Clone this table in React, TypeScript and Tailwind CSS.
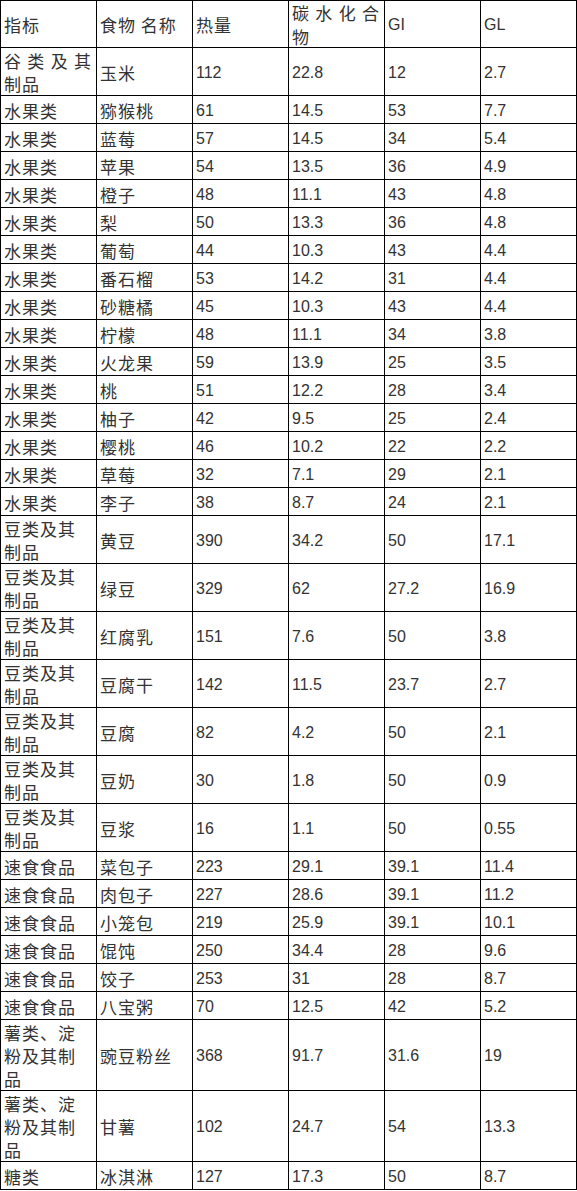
import React from "react";

type Row = [string, string, string, string, string, string];

const rows: Row[] = [
  ["谷类及其制品", "玉米", "112", "22.8", "12", "2.7"],
  ["水果类", "猕猴桃", "61", "14.5", "53", "7.7"],
  ["水果类", "蓝莓", "57", "14.5", "34", "5.4"],
  ["水果类", "苹果", "54", "13.5", "36", "4.9"],
  ["水果类", "橙子", "48", "11.1", "43", "4.8"],
  ["水果类", "梨", "50", "13.3", "36", "4.8"],
  ["水果类", "葡萄", "44", "10.3", "43", "4.4"],
  ["水果类", "番石榴", "53", "14.2", "31", "4.4"],
  ["水果类", "砂糖橘", "45", "10.3", "43", "4.4"],
  ["水果类", "柠檬", "48", "11.1", "34", "3.8"],
  ["水果类", "火龙果", "59", "13.9", "25", "3.5"],
  ["水果类", "桃", "51", "12.2", "28", "3.4"],
  ["水果类", "柚子", "42", "9.5", "25", "2.4"],
  ["水果类", "樱桃", "46", "10.2", "22", "2.2"],
  ["水果类", "草莓", "32", "7.1", "29", "2.1"],
  ["水果类", "李子", "38", "8.7", "24", "2.1"],
  ["豆类及其制品", "黄豆", "390", "34.2", "50", "17.1"],
  ["豆类及其制品", "绿豆", "329", "62", "27.2", "16.9"],
  ["豆类及其制品", "红腐乳", "151", "7.6", "50", "3.8"],
  ["豆类及其制品", "豆腐干", "142", "11.5", "23.7", "2.7"],
  ["豆类及其制品", "豆腐", "82", "4.2", "50", "2.1"],
  ["豆类及其制品", "豆奶", "30", "1.8", "50", "0.9"],
  ["豆类及其制品", "豆浆", "16", "1.1", "50", "0.55"],
  ["速食食品", "菜包子", "223", "29.1", "39.1", "11.4"],
  ["速食食品", "肉包子", "227", "28.6", "39.1", "11.2"],
  ["速食食品", "小笼包", "219", "25.9", "39.1", "10.1"],
  ["速食食品", "馄饨", "250", "34.4", "28", "9.6"],
  ["速食食品", "饺子", "253", "31", "28", "8.7"],
  ["速食食品", "八宝粥", "70", "12.5", "42", "5.2"],
  ["薯类、淀粉及其制品", "豌豆粉丝", "368", "91.7", "31.6", "19"],
  ["薯类、淀粉及其制品", "甘薯", "102", "24.7", "54", "13.3"],
  ["糖类", "冰淇淋", "127", "17.3", "50", "8.7"],
];

const cell = "flex items-center border-r border-b border-black min-h-[28px] pl-[3px] pr-[4px] pt-px";
const cjk = "font-['Noto_Sans_CJK_SC',sans-serif] text-[17px] leading-[23px] tracking-[1px]";
const num = "font-['Liberation_Sans',Arial,sans-serif] text-[16px] leading-[23px]";

export default function App() {
  return (
    <div className="w-[577px] bg-white text-[#333]">
      <div className="border-l border-t border-black">
        {/* header */}
        <div className="grid grid-cols-[repeat(6,96px)] h-[47px]">
          <div className={`${cell} pt-[6px]`}>
            <span className={cjk}>指标</span>
          </div>
          <div className={`${cell} pt-[6px]`}>
            <span className={cjk}>食物 名称</span>
          </div>
          <div className={`${cell} pt-[6px]`}>
            <span className={cjk}>热量</span>
          </div>
          <div className={`${cell} pt-0`}>
            <span className={`${cjk} leading-[24px] text-justify w-full`}>碳水化合物</span>
          </div>
          <div className={`${cell} pt-[6px]`}>
            <span className={num}>GI</span>
          </div>
          <div className={`${cell} pt-[6px]`}>
            <span className={num}>GL</span>
          </div>
        </div>

        {rows.map((r, i) => (
          <div key={i} className="grid grid-cols-[repeat(6,96px)]">
            <div className={cell}>
              <span className={`${cjk} w-full ${i === 0 ? "text-justify" : ""}`}>{r[0]}</span>
            </div>
            <div className={cell}>
              <span className={cjk}>{r[1]}</span>
            </div>
            {r.slice(2).map((v, j) => (
              <div key={j} className={cell}>
                <span className={num}>{v}</span>
              </div>
            ))}
          </div>
        ))}
      </div>
    </div>
  );
}
